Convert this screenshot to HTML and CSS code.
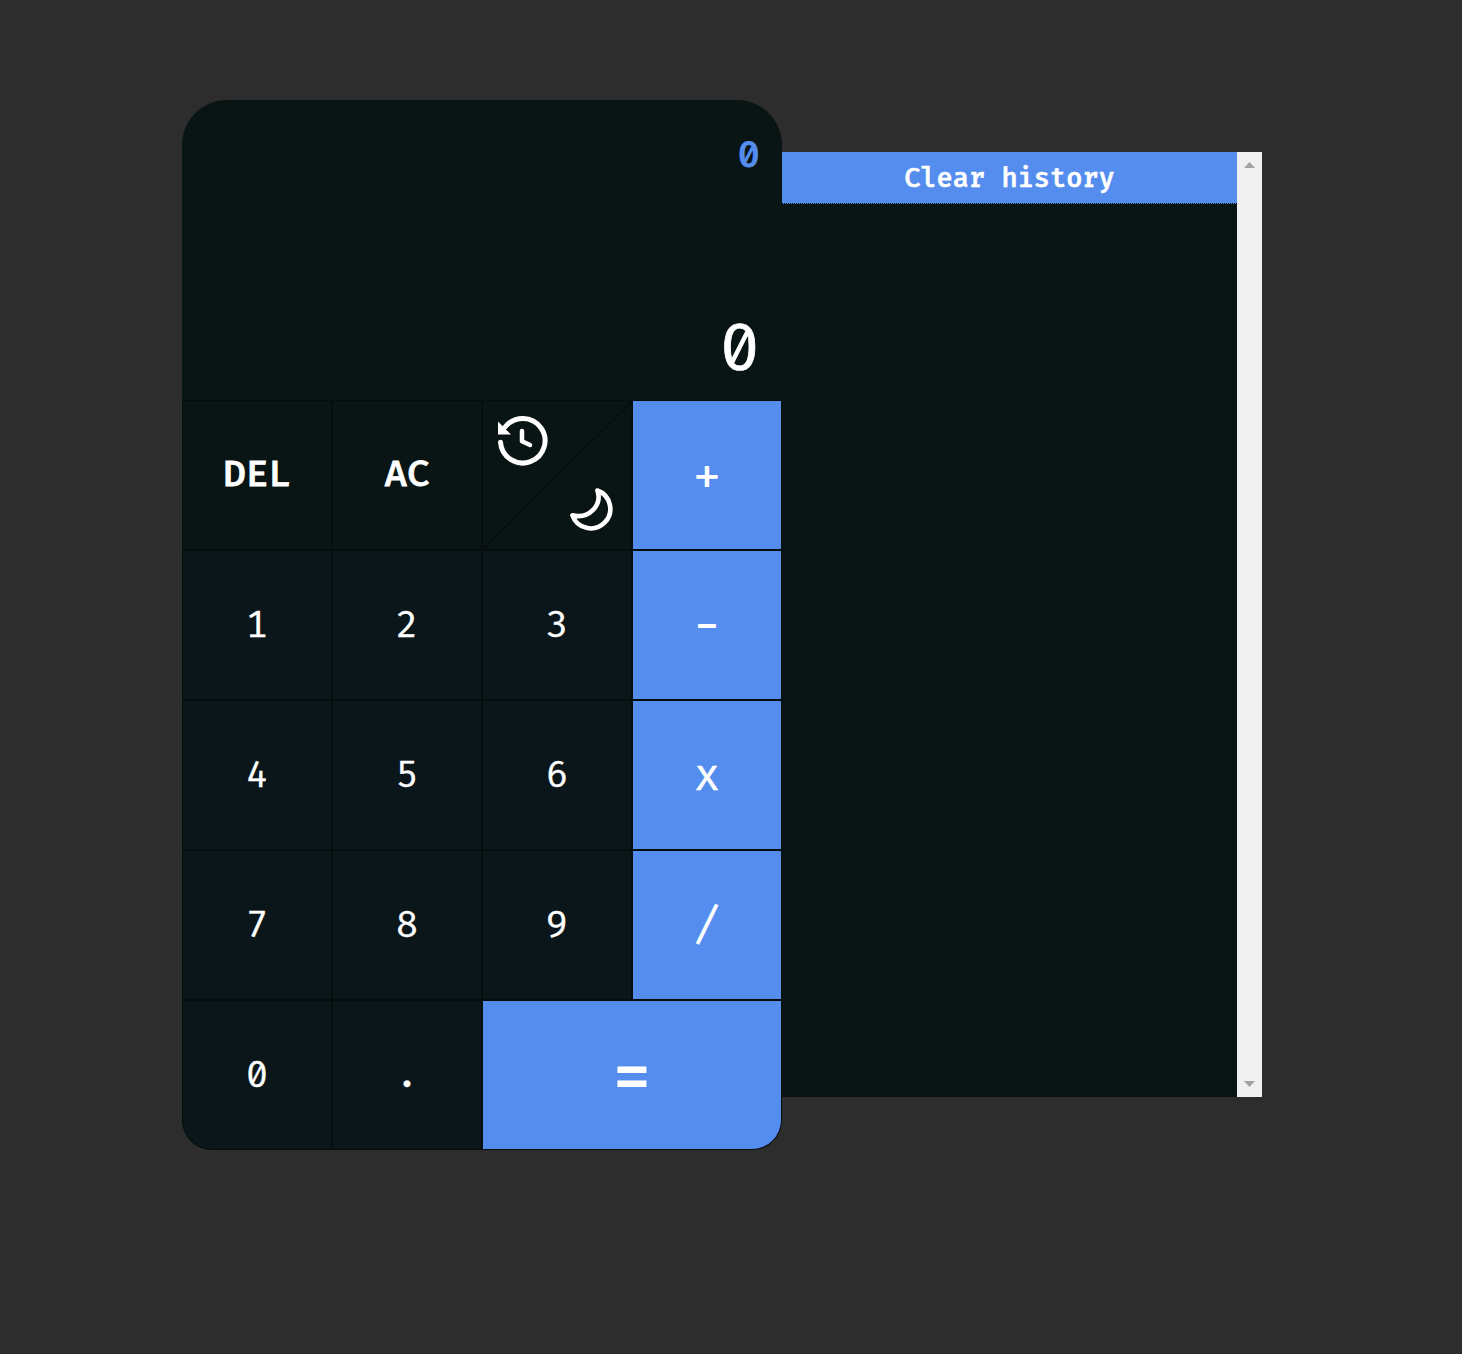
FILE: index.html
```html
<!DOCTYPE html>
<html lang="en">
<head>
<meta charset="utf-8">
<title>Calculator</title>
<link rel="stylesheet" href="styles.css">
</head>
<body>
<main class="app">
  <section class="calculator">
    <div class="display">
      <div class="previous">0</div>
      <div class="current">0</div>
    </div>
    <div class="keys">
      <button class="key action"><span>DEL</span></button>
      <button class="key action"><span>AC</span></button>
      <div class="key split">
        <svg width="148" height="148" viewBox="483 401 148 148" fill="none" stroke="#fff" stroke-linecap="round" stroke-linejoin="round">
          <path d="M630.500 402.500L484.500 548.500" stroke="#050d0d" stroke-width="2"/>
          <path d="M500.500 442.300A22.300 22.300 0 1 0 505.300 426.800" stroke-width="5"/>
          <path d="M498 421.500L511 434.500H498Z" fill="#fff" stroke="none"/>
          <path d="M522 431V441.300L530 445" stroke-width="4.500"/>
          <path d="M597.400 490.500A19.500 19.500 0 1 1 572.400 515.300C589 519.500 602.500 505 597.400 490.500Z" stroke-width="4.600"/>
        </svg>
      </div>
      <button class="key operator sign"><span>+</span></button>
      <button class="key"><span>1</span></button>
      <button class="key"><span>2</span></button>
      <button class="key"><span>3</span></button>
      <button class="key operator sign minus"><span>-</span></button>
      <button class="key"><span>4</span></button>
      <button class="key"><span>5</span></button>
      <button class="key"><span>6</span></button>
      <button class="key operator"><span>x</span></button>
      <button class="key"><span>7</span></button>
      <button class="key"><span>8</span></button>
      <button class="key"><span>9</span></button>
      <button class="key operator"><span>/</span></button>
      <button class="key"><span>0</span></button>
      <button class="key"><span>.</span></button>
      <button class="key operator sign equals"><span>=</span></button>
    </div>
  </section>
  <aside class="history">
    <div class="entries"><button class="clear">Clear history</button></div>
    <div class="scrollbar">
      <svg width="11" height="6" viewBox="0 0 11 6"><path d="M5.500 0L11 6H0Z" fill="#a3a3a3"/></svg>
      <svg width="11" height="6" viewBox="0 0 11 6"><path d="M0 0H11L5.500 6Z" fill="#a3a3a3"/></svg>
    </div>
  </aside>
</main>
</body>
</html>
```
FILE: styles.css
```css
* { box-sizing: border-box; }
body {
  margin: 0;
  background: #2d2d2d;
  color: #fff;
  font-family: "Fira Mono", "Fira Code", "Noto Sans", sans-serif;
  font-feature-settings: "zero";
}
button { font: inherit; font-feature-settings: inherit; color: inherit; }
.app {
  display: flex;
  align-items: flex-start;
  width: 1080px;
  height: 1050px;
  margin: 100px 0 0 182px;
}
.calculator {
  width: 600px;
  height: 1050px;
  border-radius: 45px 45px 30px 30px;
  background: #091514;
  overflow: hidden;
}
.display {
  height: 300px;
  padding: 29px 22px 0;
  text-align: right;
}
.previous { height: 150px; font-size: 37.5px; line-height: 51px; font-weight: 500; -webkit-text-stroke: 0.8px; color: #558dee; }
.current { font-size: 67.5px; line-height: 137px; font-weight: 400; -webkit-text-stroke: 0.7px; }
.keys {
  display: grid;
  grid-template-columns: repeat(4, 150px);
  grid-auto-rows: 150px;
}
.key {
  display: flex;
  align-items: center;
  justify-content: center;
  padding: 0;
  border: 1px solid #050d0d;
  border-radius: 0;
  background: #0a161a;
  font-size: 37.5px;
  line-height: 52px;
  -webkit-text-stroke: 0.3px;
}
.action, .split { background: #091514; }
.action { padding-bottom: 2px; font-weight: 500; font-size: 37.5px; -webkit-text-stroke: 0.8px; }
.operator { background: #558dee; font-size: 45px; }
.sign { padding-top: 3px; font-family: "Fira Code", "Noto Sans", sans-serif; font-weight: 500; font-size: 42px; -webkit-text-stroke: 0; }
.minus { padding-top: 1px; }
.equals { grid-column: span 2; padding-top: 5px; font-size: 68px; font-weight: 500; border-bottom-right-radius: 30px; }
.key:nth-child(17) { border-bottom-left-radius: 30px; }
.history { display: flex; width: 480px; height: 945px; margin-top: 52px; background: #091514; }
.entries { flex: 1; }
.clear {
  display: block;
  width: 100%;
  height: 52px;
  padding: 1px 0 0;
  border: 0;
  border-bottom: 1px dotted #050d0d;
  background: #558dee;
  font: 500 27px/50px "Fira Mono", "Fira Code", monospace;
  -webkit-text-stroke: 0.6px;
}
.scrollbar {
  display: flex;
  flex-direction: column;
  align-items: center;
  justify-content: space-between;
  width: 25px;
  padding: 10px 0;
  background: #f0f0f0;
}
```
